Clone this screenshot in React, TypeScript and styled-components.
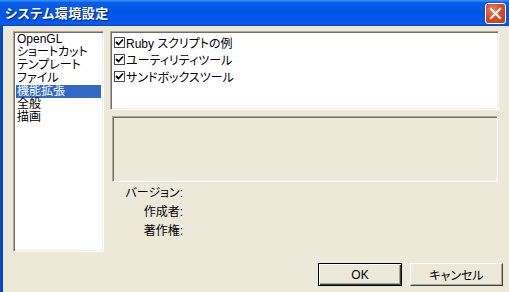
import React from "react";
import styled, { createGlobalStyle } from "styled-components";

const Global = createGlobalStyle`
  html, body { margin: 0; padding: 0; background: #ECE9D8; }
  body { width: 509px; height: 292px; overflow: hidden; }
  #root { width: 509px; height: 292px; }
`;

const FONT = `"Liberation Sans", "Noto Sans CJK JP", sans-serif`;

const Window = styled.div`
  width: 509px;
  height: 292px;
  display: flex;
  flex-direction: column;
  font-family: ${FONT};
  font-size: 12px;
  font-feature-settings: "palt";
  color: #000;
`;

const TitleBar = styled.div`
  height: 26px;
  flex: none;
  display: flex;
  align-items: center;
  justify-content: space-between;
  padding: 0 3px 0 5px;
  background: linear-gradient(
    to bottom,
    #3d95ff 0%,
    #0a5fe6 10%,
    #0055e5 45%,
    #0058ea 80%,
    #0a5ee8 92%,
    #0046c8 100%
  );
  box-sizing: border-box;
`;

const Title = styled.span`
  color: #fff;
  font-family: "Noto Sans CJK JP", sans-serif;
  font-weight: bold;
  font-size: 13px;
  letter-spacing: 0.5px;
  text-shadow: 1px 1px 0 #0a1e6e;
  line-height: 26px;
`;

const CloseButton = styled.div`
  width: 21px;
  height: 21px;
  box-sizing: border-box;
  border: 1px solid #fff;
  border-radius: 3px;
  background: radial-gradient(circle at 35% 30%, #ec8064 0%, #df4a25 45%, #c23a1a 100%);
  display: flex;
  align-items: center;
  justify-content: center;
  margin-top: 1px;
`;

const Body = styled.div`
  flex: 1;
  display: flex;
  flex-direction: column;
  background: #ece9d8;
  border-left: 3px solid #0747c9;
  padding: 5px 6px 0 10px;
`;

const Main = styled.div`
  display: flex;
  gap: 6px;
  height: 221px;
`;

const Sunken = styled.div`
  box-sizing: border-box;
  background: #fff;
  border-top: 1px solid #aca899;
  border-left: 1px solid #aca899;
  border-right: 1px solid #fff;
  border-bottom: 1px solid #fff;
  box-shadow: inset 1px 1px 0 #716f64, inset -1px -1px 0 #f1efe2;
`;

const ListBox = styled(Sunken)`
  width: 91px;
  height: 221px;
  padding: 1px 2px 0 2px;
  display: flex;
  flex-direction: column;
`;

const ListItem = styled.div<{ $selected?: boolean }>`
  height: 13px;
  line-height: 13px;
  padding-left: 1px;
  white-space: nowrap;
  background: ${(p) => (p.$selected ? "#316ac5" : "transparent")};
  color: ${(p) => (p.$selected ? "#fff" : "#000")};
`;

const RightColumn = styled.div`
  width: 389px;
  display: flex;
  flex-direction: column;
`;

const CheckList = styled(Sunken)`
  height: 79px;
  padding: 2px 3px 0 3px;
  display: flex;
  flex-direction: column;
`;

const CheckRow = styled.div`
  height: 17px;
  display: flex;
  align-items: center;
  gap: 1px;
  white-space: nowrap;
`;

const CheckBox = styled.span`
  width: 11px;
  height: 11px;
  box-sizing: border-box;
  border: 1px solid #4a4a4a;
  background: #fff;
  display: inline-flex;
  align-items: center;
  justify-content: center;
  flex: none;
`;

const DescBox = styled.div`
  box-sizing: border-box;
  height: 66px;
  margin: 6px 1px 0 2px;
  border-top: 1px solid #aca899;
  border-left: 1px solid #aca899;
  border-right: 1px solid #fff;
  border-bottom: 1px solid #fff;
  box-shadow: inset 1px 1px 0 #716f64, inset -1px -1px 0 #f1efe2;
`;

const InfoList = styled.div`
  display: grid;
  grid-template-columns: 73px 1fr;
  grid-auto-rows: 19px;
  margin-top: 2px;
`;

const InfoLabel = styled.div`
  text-align: right;
  line-height: 19px;
  white-space: nowrap;
`;

const ButtonRow = styled.div`
  display: flex;
  justify-content: flex-end;
  gap: 8px;
  margin-top: 11px;
`;

const Button = styled.button<{ $default?: boolean; $w: number }>`
  width: ${(p) => p.$w}px;
  height: 23px;
  box-sizing: border-box;
  font-family: ${FONT};
  font-size: 12px;
  font-feature-settings: "palt";
  color: #000;
  background: #ece9d8;
  padding: 0;
  border: 1px solid;
  border-color: ${(p) => (p.$default ? "#000" : "#fff #404040 #404040 #fff")};
  box-shadow: ${(p) =>
    p.$default
      ? "inset 1px 1px 0 #fff, inset -1px -1px 0 #404040, inset -2px -2px 0 #aca899"
      : "inset -1px -1px 0 #aca899"};
`;

const items = ["OpenGL", "ショートカット", "テンプレート", "ファイル", "機能拡張", "全般", "描画"];
const checks = ["Ruby スクリプトの例", "ユーティリティツール", "サンドボックスツール"];
const infos = ["バージョン:", "作成者:", "著作権:"];

export default function App() {
  return (
    <>
      <Global />
      <Window>
        <TitleBar>
          <Title>システム環境設定</Title>
          <CloseButton>
            <svg width="13" height="13" viewBox="0 0 13 13">
              <path d="M2 2 L11 11 M11 2 L2 11" stroke="#fff" strokeWidth="2.2" strokeLinecap="square" />
            </svg>
          </CloseButton>
        </TitleBar>
        <Body>
          <Main>
            <ListBox>
              {items.map((it) => (
                <ListItem key={it} $selected={it === "機能拡張"}>
                  {it}
                </ListItem>
              ))}
            </ListBox>
            <RightColumn>
              <CheckList>
                {checks.map((c) => (
                  <CheckRow key={c}>
                    <CheckBox>
                      <svg width="9" height="9" viewBox="0 0 9 9">
                        <path d="M1 4 L3.5 6.5 L8 1.5" stroke="#000" strokeWidth="1.8" fill="none" />
                      </svg>
                    </CheckBox>
                    <span>{c}</span>
                  </CheckRow>
                ))}
              </CheckList>
              <DescBox />
              <InfoList>
                {infos.map((i) => (
                  <React.Fragment key={i}>
                    <InfoLabel>{i}</InfoLabel>
                    <div />
                  </React.Fragment>
                ))}
              </InfoList>
            </RightColumn>
          </Main>
          <ButtonRow>
            <Button $default $w={84}>OK</Button>
            <Button $w={93}>キャンセル</Button>
          </ButtonRow>
        </Body>
      </Window>
    </>
  );
}
